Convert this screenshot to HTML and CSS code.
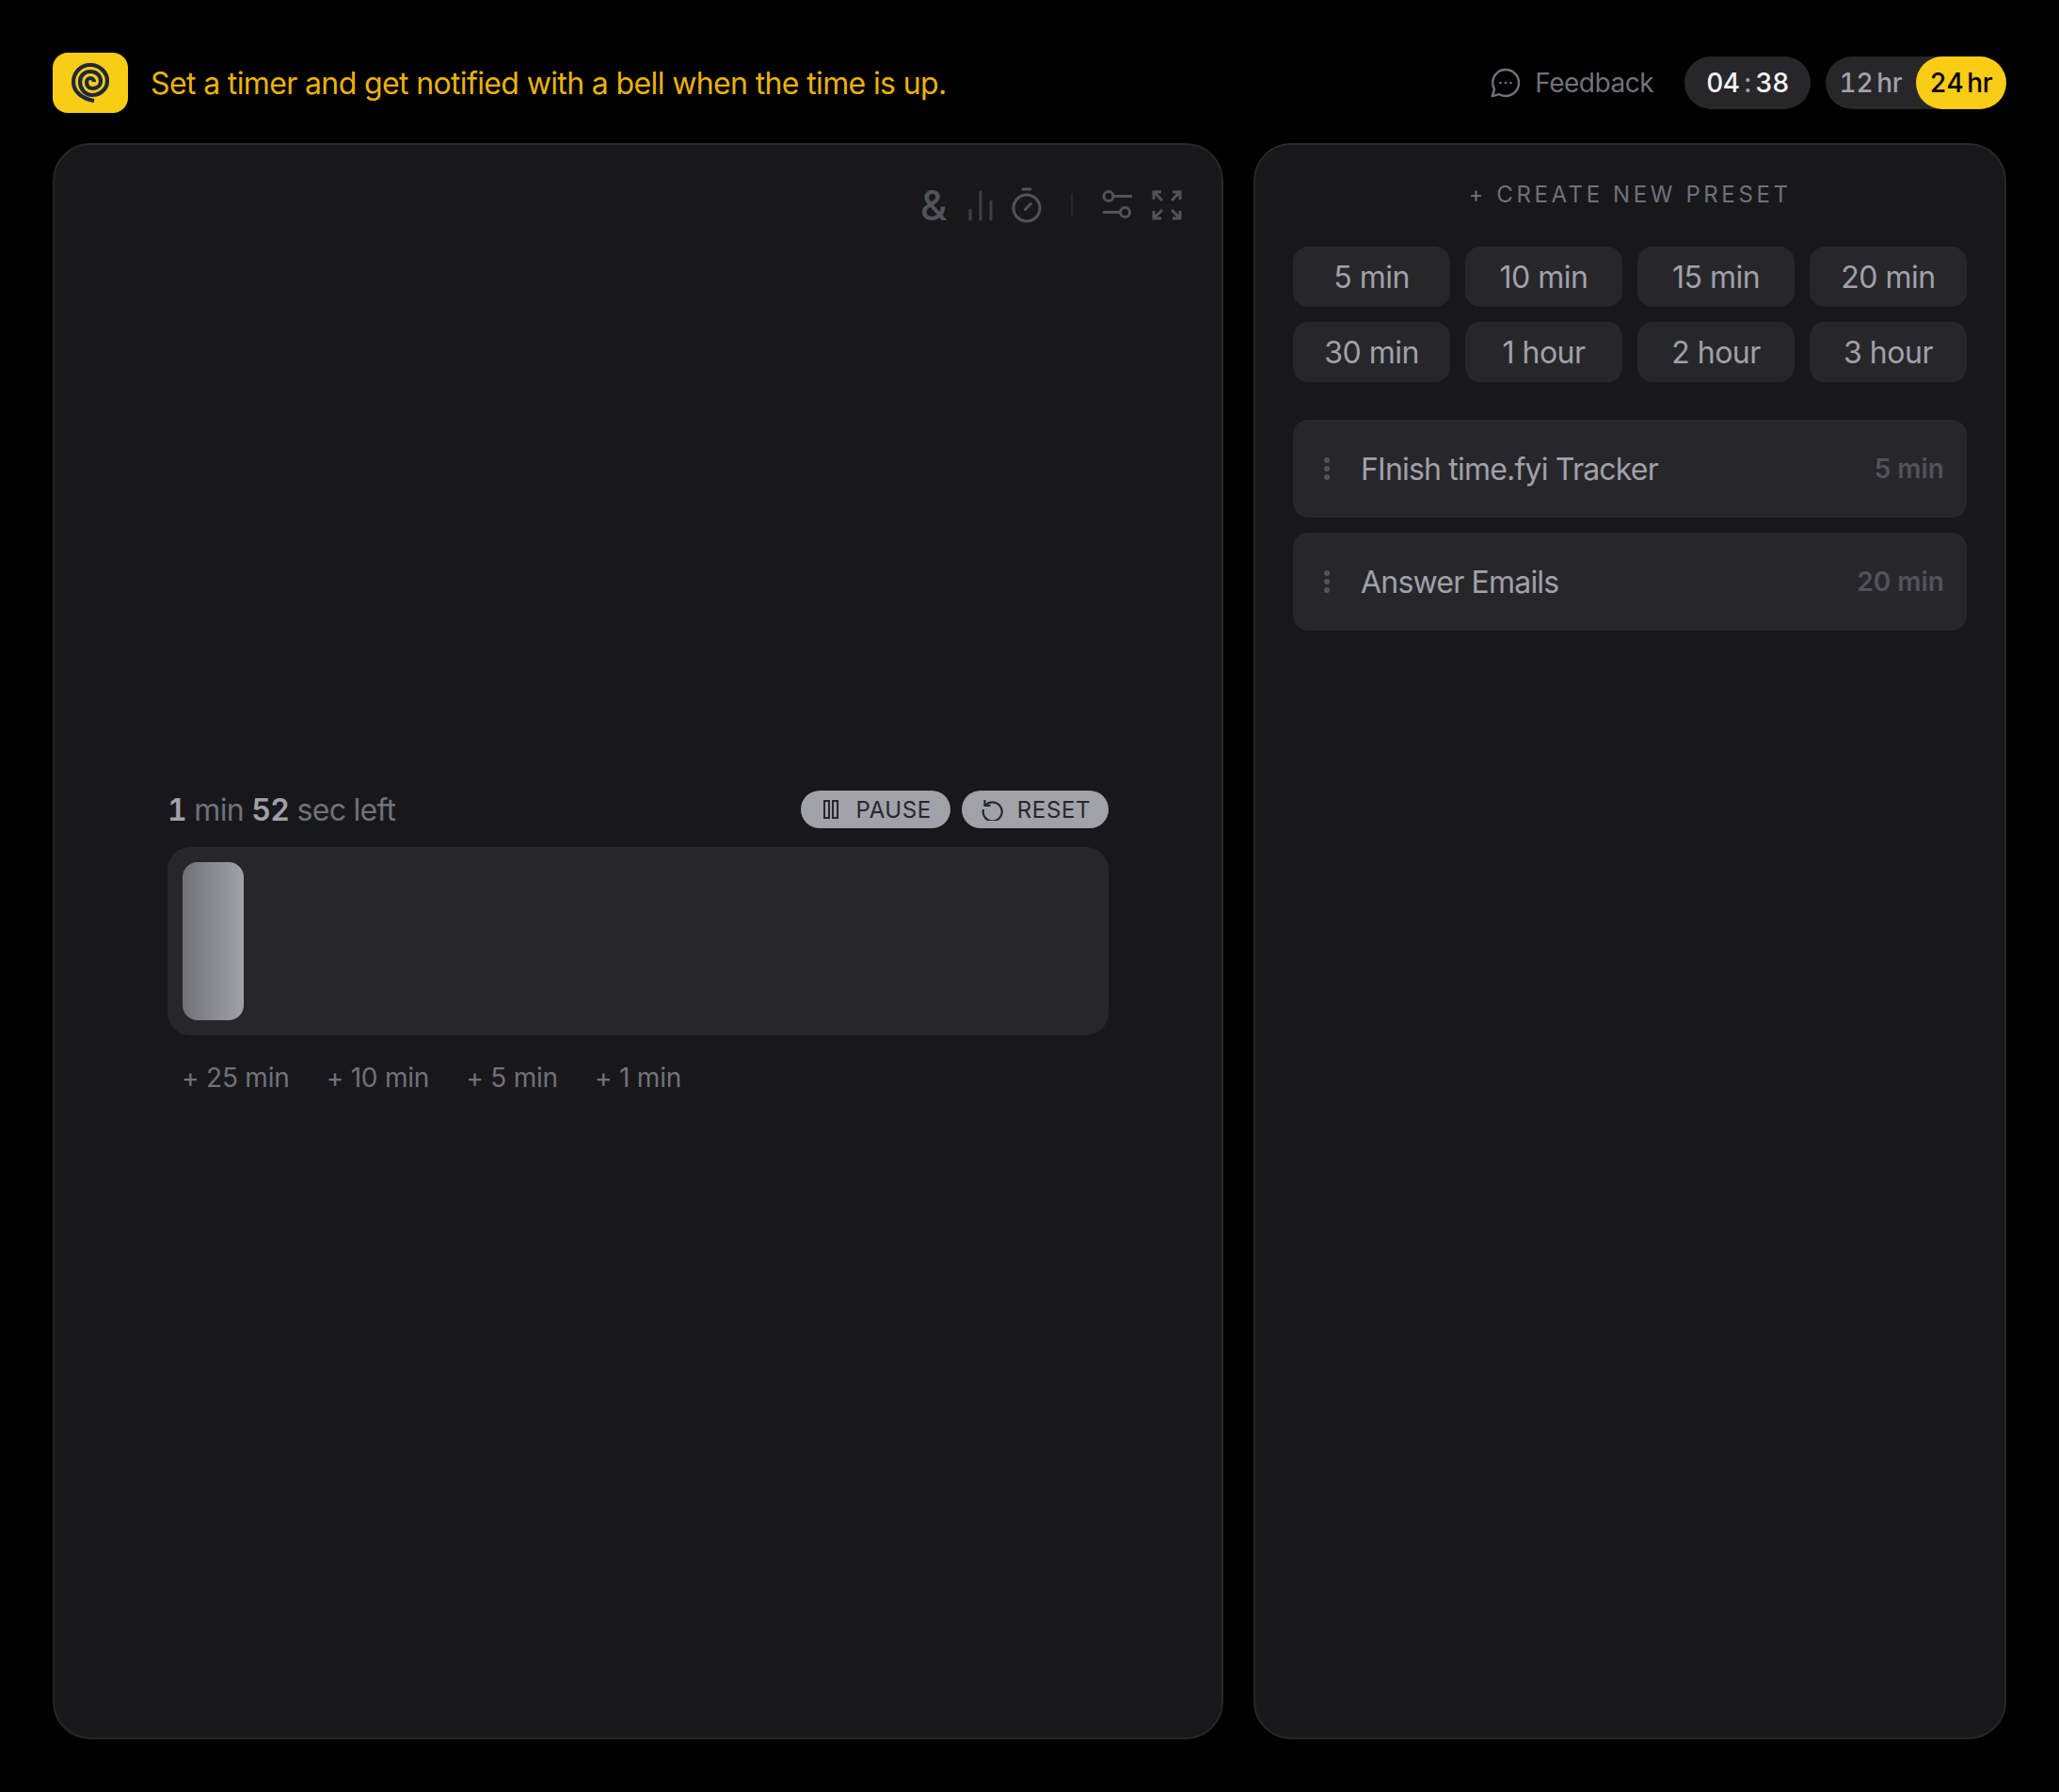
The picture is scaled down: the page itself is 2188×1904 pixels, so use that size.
FILE: index.html
```html
<!DOCTYPE html>
<html lang="en">
<head>
    <meta charset="UTF-8">
    <meta name="viewport" content="width=device-width, initial-scale=1.0">
    <title>Timer</title>
    <link rel="stylesheet" href="styles.css">
</head>
<body>
    <header class="topbar">
        <div class="brand">
            <div class="logo">
                <svg width="40" height="42" viewBox="0 0 40 42" fill="none" stroke="#1e293b" stroke-width="4.200">
                    <path d="M24 40C12 38 2 31 2 20C2 10 10 2 20 2C30 2 38 10 38 19C38 28 30 34 22 34C14 34 9 27 9 20C9 13 14 9 20 9C26 9 31 13 31 19C31 24 27 27 22 27C18 27 16 24 16 20C16 18 18 16 20 16C22 16 24 18 24 20"/>
                </svg>
            </div>
            <p class="tagline">Set a timer and get notified with a bell when the time is up.</p>
        </div>
        <div class="topbar-right">
            <a class="feedback">
                <svg width="32" height="32" viewBox="0 0 32 32" fill="none" stroke="#71717a" stroke-width="2.4" stroke-linejoin="round">
                    <path d="M16 2C8.300 2 2.200 8.200 2.200 16C2.200 18.500 2.900 20.800 4 22.800L1.800 30.200L9.200 28.200C11.200 29.300 13.500 30 16 30C23.700 30 30 23.700 30 16C30 8.200 23.700 2 16 2Z"/>
                    <path d="M10.500 16H10.600M16 16H16.100M21.400 16H21.500" stroke-linecap="round" stroke-width="2.600"/>
                </svg>
                <span>Feedback</span>
            </a>
            <div class="clock">04<span class="clock-sep">:</span>38</div>
            <div class="hour-toggle">
                <span class="hour-option">12<i class="unit">hr</i></span>
                <span class="hour-option active">24<i class="unit">hr</i></span>
            </div>
        </div>
    </header>

    <main class="panels">
        <section class="panel timer-panel">
            <div class="toolbar">
                <span class="amp">&amp;</span>
                <svg class="tool-bars" width="28" height="34" viewBox="0 0 28 34" fill="none" stroke="#3f3f46" stroke-width="3" stroke-linecap="round">
                    <path d="M3 22V32M14 3V32M25 13V32"/>
                </svg>
                <svg width="34" height="40" viewBox="0 0 34 40" fill="none" stroke="#52525b" stroke-width="3">
                    <circle cx="17" cy="23" r="14"/>
                    <path d="M13 3H21" stroke-linecap="round"/>
                    <path d="M15.500 24.500L21.500 18.500" stroke-linecap="round"/>
                </svg>
                <span class="tool-divider"></span>
                <svg class="tool-sliders" width="32" height="32" viewBox="0 0 32 32" fill="none" stroke="#52525b" stroke-width="3">
                    <circle cx="7" cy="6.500" r="5"/>
                    <circle cx="24.500" cy="23.500" r="5"/>
                    <path d="M12 6.500H31M2 23.500H19.500" stroke-linecap="round"/>
                </svg>
                <svg width="32" height="32" viewBox="0 0 32 32" fill="none" stroke="#52525b" stroke-width="3">
                    <path d="M2 10V2H10M2 2L11 11M22 2H30V10M30 2L21 11M2 22V30H10M2 30L11 21M30 22V30H22M30 30L21 21"/>
                </svg>
            </div>

            <div class="timer">
                <div class="timer-head">
                    <p class="time-left"><b>1</b> min <b>52</b> sec left</p>
                    <div class="timer-actions">
                        <button class="pill-btn pause-btn">
                            <svg width="16" height="20" viewBox="0 0 16 20" fill="none" stroke="#27272a" stroke-width="2">
                                <rect x="1" y="1" width="5" height="18"/>
                                <rect x="10" y="1" width="5" height="18"/>
                            </svg>
                            PAUSE
                        </button>
                        <button class="pill-btn reset-btn">
                            <svg width="24" height="24" viewBox="0 0 24 24" fill="none" stroke="#27272a" stroke-width="2.200">
                                <path d="M4.500 7.500A10 10 0 1 1 2 12"/>
                                <path d="M3.500 2V8H9.500"/>
                            </svg>
                            RESET
                        </button>
                    </div>
                </div>
                <div class="track">
                    <div class="fill"></div>
                </div>
                <div class="increments">
                    <a>+ 25 min</a>
                    <a>+ 10 min</a>
                    <a>+ 5 min</a>
                    <a>+ 1 min</a>
                </div>
            </div>
        </section>

        <aside class="panel preset-panel">
            <div class="create-preset">+ CREATE NEW PRESET</div>
            <div class="preset-grid">
                <button class="preset">5 min</button>
                <button class="preset">10 min</button>
                <button class="preset">15 min</button>
                <button class="preset">20 min</button>
                <button class="preset">30 min</button>
                <button class="preset">1 hour</button>
                <button class="preset">2 hour</button>
                <button class="preset">3 hour</button>
            </div>
            <div class="saved-list">
                <div class="saved">
                    <span class="grip"><i></i><i></i><i></i></span>
                    <span class="saved-name">FInish time.fyi Tracker</span>
                    <span class="saved-time">5 min</span>
                </div>
                <div class="saved">
                    <span class="grip"><i></i><i></i><i></i></span>
                    <span class="saved-name">Answer Emails</span>
                    <span class="saved-time">20 min</span>
                </div>
            </div>
        </aside>
    </main>
</body>
</html>
```

FILE: styles.css
```css
* {
    box-sizing: border-box;
}
body {
    margin: 0;
    height: 1904px;
    padding: 56px;
    background: #000;
    color: #a1a1aa;
    font-family: Inter, "Liberation Sans", sans-serif;
    display: flex;
    flex-direction: column;
    gap: 32px;
}
p {
    margin: 0;
}
button {
    font-family: inherit;
    border: none;
    cursor: pointer;
}

.topbar {
    display: flex;
    justify-content: space-between;
    align-items: center;
    height: 64px;
}
.brand {
    display: flex;
    align-items: center;
    gap: 24px;
}
.logo {
    width: 80px;
    height: 64px;
    background: #facc15;
    border-radius: 16px;
    display: flex;
    align-items: center;
    justify-content: center;
}
.tagline {
    color: #eab308;
    font-size: 32px;
    letter-spacing: -0.63px;
}
.topbar-right {
    display: flex;
    align-items: center;
}
.feedback {
    display: flex;
    align-items: center;
    gap: 15px;
    color: #71717a;
    font-size: 28px;
    letter-spacing: -0.5px;
    margin-right: 33px;
}
.clock {
    width: 134px;
    height: 56px;
    border-radius: 28px;
    background: #27272a;
    color: #f4f4f5;
    font-size: 28px;
    font-weight: 500;
    font-variant-numeric: tabular-nums;
    letter-spacing: -0.5px;
    display: flex;
    align-items: center;
    justify-content: center;
    margin-right: 16px;
}
.clock-sep {
    color: #a1a1aa;
    margin: 0 5px;
}
.hour-toggle {
    width: 192px;
    height: 56px;
    border-radius: 28px;
    background: #27272a;
    display: flex;
    font-size: 28px;
    font-weight: 500;
    font-variant-numeric: tabular-nums;
    letter-spacing: -0.3px;
}
.hour-option {
    flex: 1;
    display: flex;
    align-items: center;
    justify-content: center;
    border-radius: 28px;
}
.hour-option.active {
    background: #facc15;
    color: #000;
}
.unit {
    font-style: normal;
    margin-left: 4px;
}

.panels {
    flex: 1;
    display: flex;
    gap: 32px;
}
.panel {
    background: #18181b;
    border: 2px solid #27272a;
    border-radius: 40px;
}
.timer-panel {
    flex: 1;
    position: relative;
    display: flex;
    align-items: center;
    justify-content: center;
}
.preset-panel {
    width: 800px;
    padding: 0 40px;
}

.toolbar {
    position: absolute;
    top: 44px;
    right: 42px;
    display: flex;
    align-items: center;
    color: #52525b;
}
.amp {
    width: 28px;
    font-size: 44px;
    font-weight: 500;
    line-height: 40px;
    display: flex;
    justify-content: center;
    margin-right: 22px;
}
.toolbar svg {
    margin-right: 20px;
}
.toolbar svg:last-child {
    margin-right: 0;
}
.toolbar .tool-bars {
    margin-right: 18px;
}
.toolbar .tool-sliders {
    margin-right: 21px;
}
.tool-divider {
    width: 2px;
    height: 24px;
    background: #27272a;
    margin: 0 31px 0 10px;
}

.timer {
    width: 1000px;
}
.timer-head {
    height: 60px;
    padding: 0 0 20px;
    display: flex;
    justify-content: space-between;
    align-items: center;
}
.time-left {
    color: #71717a;
    font-size: 32px;
    letter-spacing: -0.7px;
}
.time-left b {
    color: #a1a1aa;
    font-weight: 600;
    font-variant-numeric: tabular-nums;
}
.timer-actions {
    display: flex;
    gap: 12px;
}
.pill-btn {
    height: 40px;
    border-radius: 20px;
    background: #a1a1aa;
    color: #27272a;
    font-size: 24px;
    letter-spacing: 0.6px;
    display: flex;
    align-items: center;
    gap: 18px;
    padding: 0 20px 0 24px;
}
.reset-btn {
    gap: 14px;
    padding: 0 19px 0 21px;
}
.track {
    height: 200px;
    padding: 16px;
    background: #27272a;
    border-radius: 24px;
}
.fill {
    width: 65px;
    height: 100%;
    border-radius: 16px;
    background: linear-gradient(90deg, #71717a, #a1a1aa);
}
.increments {
    height: 60px;
    padding: 28px 0 0 15px;
    display: flex;
    gap: 39px;
    color: #71717a;
    font-size: 28px;
    letter-spacing: -0.2px;
}

.create-preset {
    height: 108px;
    padding-bottom: 4px;
    display: flex;
    align-items: center;
    justify-content: center;
    color: #71717a;
    font-size: 24px;
    letter-spacing: 3.6px;
}
.preset-grid {
    display: grid;
    grid-template-columns: repeat(4, 1fr);
    gap: 16px;
}
.preset {
    height: 64px;
    background: #27272a;
    color: #a1a1aa;
    border-radius: 16px;
    font-size: 32px;
    letter-spacing: -0.5px;
}
.saved-list {
    margin-top: 40px;
    display: flex;
    flex-direction: column;
    gap: 16px;
}
.saved {
    height: 104px;
    background: #27272a;
    border-radius: 16px;
    display: flex;
    align-items: center;
    padding: 0 24px 0 32px;
}
.grip {
    width: 8px;
    display: flex;
    flex-direction: column;
    align-items: center;
    gap: 3px;
    margin-right: 32px;
}
.grip i {
    width: 6px;
    height: 6px;
    border-radius: 50%;
    background: #52525b;
}
.saved-name {
    flex: 1;
    font-size: 32px;
    letter-spacing: -0.8px;
}
.saved-time {
    color: #52525b;
    font-size: 28px;
    font-weight: 600;
}
```
